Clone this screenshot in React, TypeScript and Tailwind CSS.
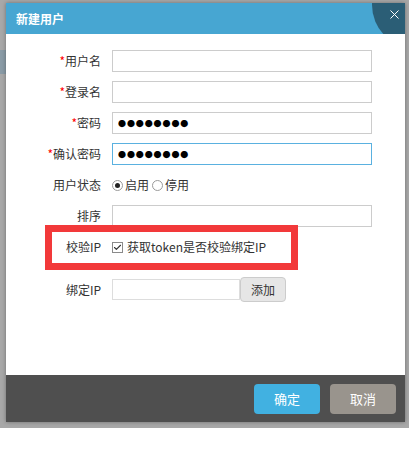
import React from 'react';
import { X, Check } from 'lucide-react';

const Label: React.FC<{ text: string; required?: boolean }> = ({ text, required }) => (
  <div className="w-[95px] shrink-0 text-right text-[12px] text-[#333]">
    {required && <span className="text-[#ff0000]">*</span>}
    {text}
  </div>
);

const Field: React.FC<{ value?: string; focused?: boolean }> = ({ value = '', focused }) => (
  <input
    readOnly
    value={value}
    className={`w-[260px] h-[22px] border px-[5px] text-[8px] tracking-[0.9px] text-black outline-none ${
      focused ? 'border-[#5ab1e0]' : 'border-[#cccccc]'
    }`}
  />
);

const Radio: React.FC<{ checked?: boolean; label: string }> = ({ checked, label }) => (
  <label className="flex items-center gap-[2px] text-[12px] text-[#333]">
    <span className="w-[11px] h-[11px] rounded-full border border-[#9a9a9a] bg-white flex items-center justify-center">
      {checked && <span className="w-[5px] h-[5px] rounded-full bg-[#222]" />}
    </span>
    {label}
  </label>
);

export default function App() {
  return (
    <div className="w-[409px] h-[460px] bg-white overflow-hidden font-['Noto_Sans_CJK_SC',sans-serif]">
      <div className="relative h-[428px] bg-[#a8a8a8] pt-[3px] pl-[6px]">
        {/* page behind the mask */}
        <div className="absolute left-0 top-[50px] w-[6px] h-[24px] bg-[#8a9ba6]" />

        <div className="relative w-[399px] h-[419px] flex flex-col shadow-[0_0_4px_rgba(0,0,0,0.35)]">
          <div className="relative h-[31px] shrink-0 bg-[#47a6d2] overflow-hidden flex items-center pl-[10px]">
            <span className="text-[12px] font-bold text-white">新建用户</span>
            <div className="absolute left-[366px] top-[-41px] w-[86px] h-[86px] rounded-full bg-[#2b5e76]" />
            <X className="absolute left-[381px] top-[4px] text-white" size={15} strokeWidth={1.6} />
          </div>

          <div className="relative flex-1 bg-white pt-[16px] flex flex-col gap-[9px]">
            <div className="flex items-center gap-[11px]">
              <Label text="用户名" required />
              <Field />
            </div>
            <div className="flex items-center gap-[11px]">
              <Label text="登录名" required />
              <Field />
            </div>
            <div className="flex items-center gap-[11px]">
              <Label text="密码" required />
              <Field value="●●●●●●●●" />
            </div>
            <div className="flex items-center gap-[11px]">
              <Label text="确认密码" required />
              <Field value="●●●●●●●●" focused />
            </div>
            <div className="flex items-center gap-[11px] h-[22px]">
              <Label text="用户状态" />
              <div className="flex items-center gap-[3px]">
                <Radio checked label="启用" />
                <Radio label="停用" />
              </div>
            </div>
            <div className="flex items-center gap-[11px]">
              <Label text="排序" />
              <Field />
            </div>
            <div className="flex items-center gap-[11px] h-[22px] mb-[10px]">
              <Label text="校验IP" />
              <label className="flex items-center gap-[4px] text-[12px] text-[#333]">
                <span className="w-[11px] h-[11px] border border-[#8a8a8a] bg-white flex items-center justify-center">
                  <Check size={9} strokeWidth={3} className="text-[#333]" />
                </span>
                获取token是否校验绑定IP
              </label>
            </div>
            <div className="flex items-center gap-[11px]">
              <Label text="绑定IP" />
              <div className="flex items-center">
                <input readOnly className="w-[128px] h-[21px] border border-[#dddddd] outline-none" />
                <button className="w-[46px] h-[25px] rounded-[4px] border border-[#cccccc] bg-[#e6e6e6] text-[12px] text-[#333]">
                  添加
                </button>
              </div>
            </div>

            {/* annotation highlight */}
            <div className="absolute left-[39px] top-[191px] w-[253px] h-[45px] border-[7px] border-[#f2393a]" />
          </div>

          <div className="h-[47px] shrink-0 bg-[#4f4f4f] flex items-center justify-end gap-[10px] pr-[9px]">
            <button className="w-[66px] h-[30px] rounded-[4px] bg-[#41b1e1] text-[13px] text-white">确定</button>
            <button className="w-[66px] h-[30px] rounded-[4px] bg-[#99948d] text-[13px] text-white">取消</button>
          </div>
        </div>
      </div>
    </div>
  );
}
